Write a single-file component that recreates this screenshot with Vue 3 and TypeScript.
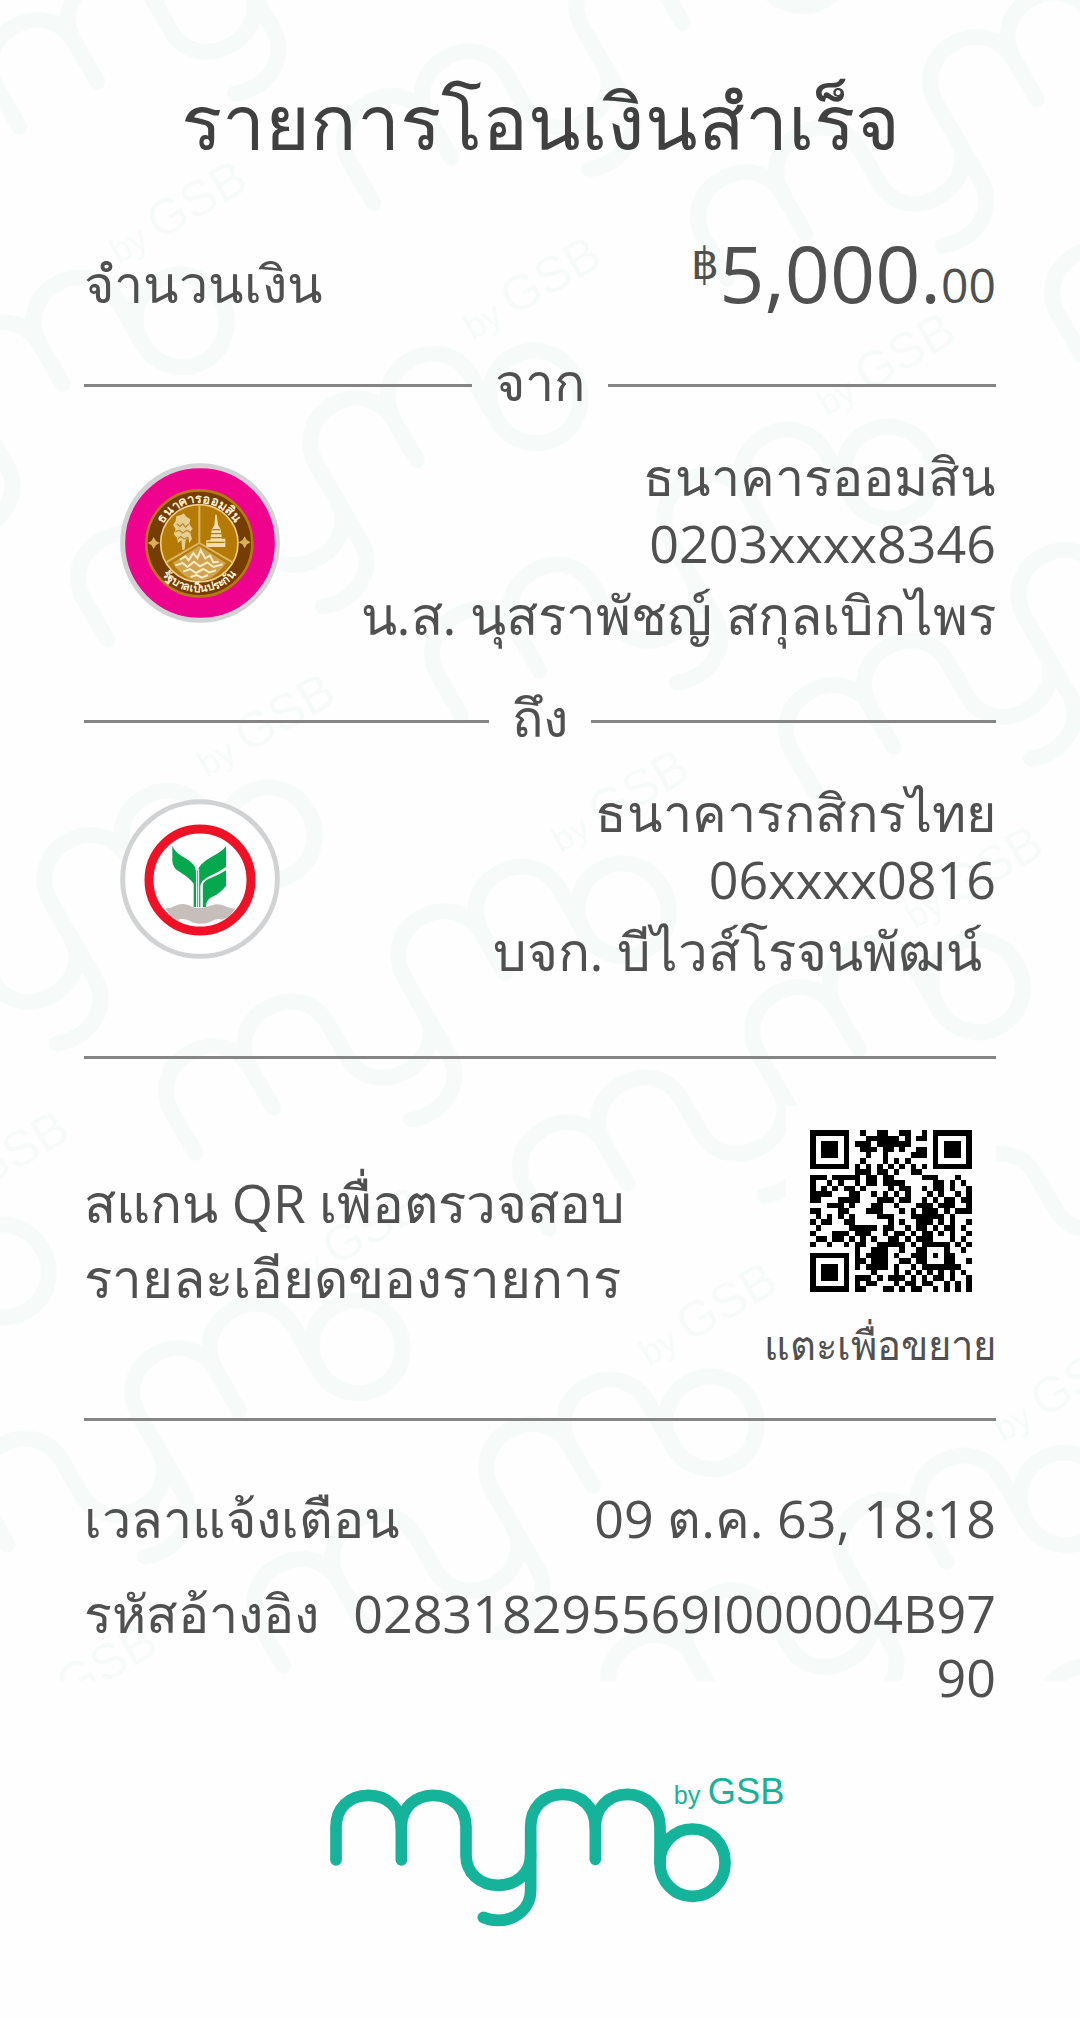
<script setup lang="ts">
interface Party {
  bank: string
  account: string
  holder: string
  logo: 'gsb' | 'kbank'
}

const sender: Party = {
  bank: 'ธนาคารออมสิน',
  account: '0203xxxx8346',
  holder: 'น.ส. นุสราพัชญ์ สกุลเบิกไพร',
  logo: 'gsb',
}
const receiver: Party = {
  bank: 'ธนาคารกสิกรไทย',
  account: '06xxxx0816',
  holder: 'บจก. บีไวส์โรจนพัฒน์\u00a0',
  logo: 'kbank',
}
const parties = [
  { heading: 'จาก', party: sender },
  { heading: 'ถึง', party: receiver },
]

// Diagonal lattice of the background brand mark
const marks: string[] = []
for (let row = -1; row <= 3; row++) {
  for (let col = -3; col <= 3; col++) {
    const x = 535 + col * 354 + row * 88
    const y = 397 + col * 76 + row * 513
    marks.push(`translate(${x} ${y}) rotate(-30) scale(.46) translate(-1147 -312)`)
  }
}

// Dark columns of every QR row, finder squares left out
const modules: number[][] = [
  [9, 12, 13, 16, 17, 20],
  [10, 11, 12, 13, 14, 15, 17, 19, 20],
  [8, 9, 10, 12, 13, 14, 15, 16, 17],
  [9, 10, 11, 13, 14, 16, 19, 20],
  [10, 13, 18, 19, 20],
  [9, 13, 15, 17],
  [8, 10, 12, 14, 16, 18, 20],
  [8, 9, 10, 12, 13, 15, 18, 19],
  [0, 1, 2, 4, 5, 6, 7, 8, 10, 11, 13, 14, 20, 21, 22, 26],
  [0, 3, 5, 8, 10, 11, 13, 14, 15, 16, 22, 23, 25, 27],
  [0, 2, 4, 6, 7, 9, 14, 16, 17, 20, 22, 23, 25, 28],
  [0, 1, 2, 3, 7, 8, 11, 13, 15, 17, 21, 23, 26, 28],
  [0, 1, 5, 6, 7, 8, 12, 13, 14, 16, 17, 20, 22, 24, 25, 27, 28],
  [3, 4, 5, 7, 11, 12, 15, 19, 20, 21, 23, 24, 25, 28],
  [0, 1, 5, 6, 10, 11, 12, 16, 18, 20, 21, 22, 24, 26, 27, 28],
  [1, 3, 5, 7, 12, 13, 14, 18, 19, 20, 21, 22, 23, 25],
  [0, 2, 3, 6, 7, 14, 16, 19, 20, 21, 23, 25, 28],
  [1, 7, 8, 9, 10, 11, 13, 14, 17, 19, 20, 22, 24, 25, 27],
  [0, 4, 5, 6, 8, 9, 10, 13, 15, 16, 18, 20, 21, 23, 25, 28],
  [1, 2, 4, 5, 7, 9, 11, 14, 15, 17, 19, 20, 21, 25, 27],
  [0, 3, 6, 8, 9, 12, 13, 14, 15, 16, 18, 20, 21, 22, 23, 24, 26, 28],
  [8, 11, 12, 13, 16, 19, 20, 24, 27],
  [8, 10, 11, 12, 13, 15, 18, 19, 20, 22, 24, 25],
  [8, 9, 11, 12, 13, 16, 17, 19, 20, 24, 25, 28],
  [8, 10, 11, 12, 13, 15, 18, 20, 21, 22, 23, 24, 25, 26],
  [11, 15, 17, 19, 21, 23, 25, 27],
  [8, 9, 10, 12, 14, 15, 16, 18, 20, 22, 23, 25, 28],
  [8, 10, 11, 15, 17, 18, 20, 21, 24, 26, 28],
  [8, 9, 13, 14, 16, 18, 19, 22, 24, 26, 28],
]
const qrPath = modules
  .map((cols, y) => cols.map((x) => `M${x} ${y}h1v1h-1z`).join(''))
  .join('')
const finders = [
  [0, 0],
  [22, 0],
  [0, 22],
]
</script>

<template>
  <main class="page">
    <svg class="defs" width="0" height="0" aria-hidden="true">
      <defs>
        <g id="mymo-mark" fill="none" stroke="currentColor" stroke-width="35" stroke-linecap="round">
          <path d="M78 304V205C78 149 117 110 175 110S274 149 274 205V304" />
          <path d="M274 205C274 149 313 110 370 110S468 149 468 205V290C468 342 509 380 565 380S662 342 662 290" />
          <path d="M856 302V205C856 148 816 107 758 107S662 148 662 205V395C662 447 620 485 565 485Q540 485 520 476" />
          <path d="M856 205C856 148 895 107 952 107S1050 148 1050 205V312" />
          <rect x="1050" y="211" width="195" height="202" rx="96" ry="99" />
        </g>
        <g id="mymo-byline" fill="currentColor" font-family="'Liberation Sans', Arial, sans-serif">
          <text x="1091" y="137" font-size="76">by</text>
          <text x="1193" y="137" font-size="109">GSB</text>
        </g>
      </defs>
    </svg>

    <div class="slip">
      <svg class="watermark" aria-hidden="true">
        <g v-for="t in marks" :key="t" :transform="t">
          <use href="#mymo-mark" />
          <use href="#mymo-byline" />
        </g>
      </svg>

      <div class="content">
        <h1>รายการโอนเงินสำเร็จ</h1>

        <div class="row amount-row">
          <span>จำนวนเงิน</span>
          <span class="amount"><span class="currency">฿</span>5,000.<span class="cents">00</span></span>
        </div>

        <section v-for="p in parties" :key="p.heading">
          <h2><span>{{ p.heading }}</span></h2>
          <div class="party">
            <svg v-if="p.party.logo === 'gsb'" class="bank-logo" viewBox="60 42 480 480" role="img" aria-label="ธนาคารออมสิน">
              <circle cx="300" cy="282" r="232" fill="#ee028e" stroke="#d0d2d3" stroke-width="15" />
              <circle cx="298" cy="283" r="159" fill="#753d02" stroke="#b57913" stroke-width="8" />
              <circle cx="298" cy="283" r="116" fill="#b47a05" stroke="#ecd08c" stroke-width="5" />
              <path d="M298 170V282L198 340M298 282L398 340" fill="none" stroke="#dcb662" stroke-width="6" />
              <path d="M298 290L378 342Q344 392 298 396Q250 392 218 342Z" fill="#cfa452" />
              <path d="M240 332l16-10 10 12 14-22 12 16 10-24 14 24 14-8 10 20 16-2M226 350l22-8 14 12 20-16 18 14 22-12 18 14 28-8M250 368l20-8 18 12 22-12 18 10 20-6M272 384l18-6 16 8 18-8" fill="none" stroke="#fbebc4" stroke-width="6" />
              <path d="M243 198l8-5 8 10 12 8-3 14 10 14-8 10 6 20-8 14-3-18-8 8-3 28-7 3-3-30-10 8-3-16-10-10 6-16-8-12 8-12 2-14z" fill="#e8cd91" />
              <path d="M230 224l10 8 8-8 8 10 10-8M226 248l12-4 10 8 12-8 12 6M234 270l8-8 10 8 12-6" fill="none" stroke="#b98d36" stroke-width="4" />
              <path d="M346 197h4l4 30 8 14 4 28h10v25h-57v-20h12l4-32 8-14z" fill="#f3dfac" />
              <path d="M337 242h24M333 254h31M330 266h36M322 280h52" stroke="#b47a05" stroke-width="4" />
              <path d="M161 268l5 9 9 5-9 5-5 9-5-9-9-5 9-5zM434 266l5 9 9 5-9 5-5 9-5-9-9-5 9-5z" fill="#dcae58" stroke="#dcae58" stroke-width="4" />
              <path id="seal-top" d="M176 283A122 122 0 0 1 420 283" fill="none" />
              <path id="seal-bottom" d="M152 283A146 146 0 0 0 444 283" fill="none" />
              <g fill="#fff0d4" font-weight="700" text-anchor="middle">
                <text font-size="38"><textPath href="#seal-top" startOffset="50%">ธนาคารออมสิน</textPath></text>
                <text font-size="34"><textPath href="#seal-bottom" startOffset="50%">รัฐบาลเป็นประกัน</textPath></text>
              </g>
            </svg>
            <svg v-else class="bank-logo" viewBox="60 30 480 480" role="img" aria-label="ธนาคารกสิกรไทย">
              <circle cx="300" cy="270" r="232" fill="#fff" stroke="#d0d2d3" stroke-width="15" />
              <path d="M196 358Q214 358 226 350Q244 341 264 348Q282 360 302 356Q322 356 336 349Q356 341 376 352Q390 360 406 358Q390 388 366 392Q350 386 332 398Q304 410 276 400Q250 384 232 394Q212 384 196 358Z" fill="#c6beba" />
              <circle cx="300" cy="273" r="153" fill="none" stroke="#ef1126" stroke-width="27" />
              <path d="M217 170Q224 188 246 202Q288 224 288 246V354H281V284Q270 268 244 252Q217 238 217 216Z" fill="#05a84c" />
              <path d="M378 172V234Q352 252 328 262Q304 274 301 290V354H292V246Q298 224 334 204Q366 188 378 172Z" fill="#05a84c" />
              <path d="M378 244V290Q362 312 336 324Q318 332 318 354H308V290Q310 274 334 266Q360 256 378 244Z" fill="#05a84c" />
              <path d="M296 240V354M306 284V354" stroke="#fff" stroke-width="3" />
            </svg>
            <div class="details">
              <p>{{ p.party.bank }}</p>
              <p class="account">{{ p.party.account }}</p>
              <p class="holder">{{ p.party.holder }}</p>
            </div>
          </div>
        </section>

        <hr />

        <div class="verify">
          <p>สแกน QR เพื่อตรวจสอบ<br />รายละเอียดของรายการ</p>
          <button type="button" class="qr">
            <span class="qr-frame">
              <svg viewBox="0 0 29 29" shape-rendering="crispEdges" aria-hidden="true">
                <path :d="qrPath" />
                <g v-for="f in finders" :key="f.join()" :transform="`translate(${f[0]} ${f[1]})`">
                  <path d="M0 0h7v7h-7zM1 1v5h5v-5zM2 2h3v3h-3z" fill-rule="evenodd" />
                </g>
              </svg>
            </span>
            <span class="qr-caption">แตะเพื่อขยาย</span>
          </button>
        </div>

        <hr />

        <dl>
          <div class="row">
            <dt>เวลาแจ้งเตือน</dt>
            <dd>09 ต.ค. 63, 18:18</dd>
          </div>
          <div class="row">
            <dt>รหัสอ้างอิง</dt>
            <dd>028318295569I000004B9790</dd>
          </div>
        </dl>
      </div>
    </div>

    <footer>
      <svg viewBox="-42 55 1464 450" role="img" aria-label="mymo by GSB">
        <use href="#mymo-mark" />
        <use href="#mymo-byline" />
      </svg>
    </footer>
  </main>
</template>

<style>
body {
  margin: 0;
  background: #fefefe;
}
</style>

<style scoped>
.page {
  color: #505050;
  font-family: 'Open Sans', 'Noto Sans', sans-serif;
  font-size: 52px;
  line-height: 64px;
}

.defs {
  position: absolute;
}

.slip {
  position: relative;
}

.watermark {
  position: absolute;
  top: 0;
  left: 0;
  width: 100%;
  height: calc(100% - 28px);
  overflow: hidden;
  color: #f6fbfa;
}

.content {
  position: relative;
  padding: 71px 84px 0;
}

h1,
h2,
p,
dl,
dd {
  margin: 0;
  font-weight: 400;
}

h1 {
  color: #404040;
  font-size: 77px;
  line-height: 100px;
  text-align: center;
}

.row {
  display: flex;
  justify-content: space-between;
  align-items: baseline;
  gap: 16px;
}

.amount-row {
  margin: 54px 0 28px;
}

.amount {
  font-size: 79px;
  line-height: 96px;
}

.currency {
  font-size: 44px;
  line-height: 48px;
  vertical-align: 24px;
}

.cents {
  font-size: 48px;
  line-height: 48px;
}

h2 {
  display: flex;
  align-items: center;
  gap: 23px;
  font-size: 52px;
}

h2 span {
  padding-bottom: 8px;
}

h2::before,
h2::after {
  content: '';
  flex: 1;
  height: 3px;
  background: #858585;
}

.party {
  display: flex;
  justify-content: space-between;
  align-items: flex-start;
  margin: 20px 0 30px;
}

.bank-logo {
  flex: none;
  width: 160px;
  height: 160px;
  margin: 22px 0 0 36px;
}

.details {
  text-align: right;
  line-height: 70px;
}

.account {
  line-height: 64px;
}

.holder {
  font-size: 53px;
  line-height: 80px;
}

hr {
  height: 3px;
  margin: 0;
  border: 0;
  background: #858585;
}

section + hr {
  margin-top: 65px;
}

.verify {
  display: flex;
  justify-content: space-between;
  margin: 47px 0 49px;
}

.verify p {
  margin-top: 59px;
  font-size: 53px;
  line-height: 75px;
}

.qr {
  display: flex;
  flex-direction: column;
  align-items: flex-end;
  gap: 5px;
  padding: 0;
  border: 0;
  background: none;
  color: inherit;
  font: inherit;
  cursor: pointer;
}

.qr-frame {
  padding: 24px;
  background: #fefefe;
}

.qr-frame svg {
  display: block;
  width: 162px;
  height: 162px;
}

.qr-caption {
  font-size: 40px;
  line-height: 48px;
}

dl {
  display: grid;
  gap: 31px;
  padding-top: 65px;
}

dt {
  flex: none;
}

dd {
  text-align: right;
  word-break: break-all;
}

footer {
  display: flex;
  justify-content: center;
  padding: 68px 0 90px;
}

footer svg {
  width: 488px;
  height: 150px;
  color: #15b39a;
}
</style>
